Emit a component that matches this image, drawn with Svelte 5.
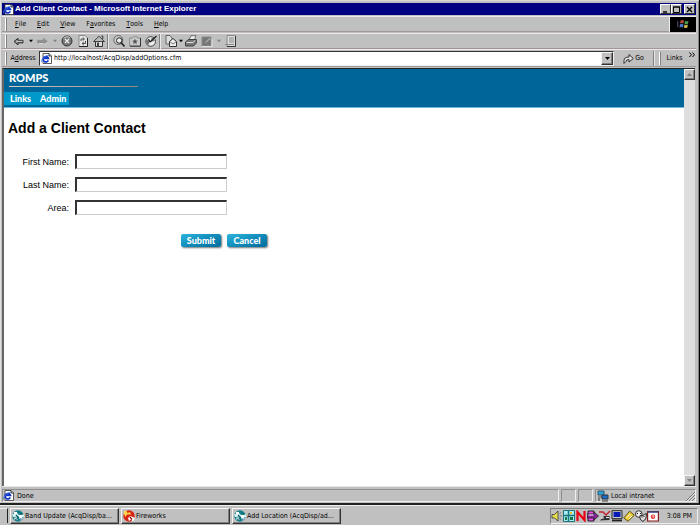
<script>
  const menus = ['File', 'Edit', 'View', 'Favorites', 'Tools', 'Help'];
  const fields = [
    { id: 'first', label: 'First Name:' },
    { id: 'last', label: 'Last Name:' },
    { id: 'area', label: 'Area:' }
  ];
  const tools = [
    'back', 'drop', 'forward', 'fade', 'stop', 'refresh', 'home', 'sep',
    'search', 'favorites', 'history', 'sep',
    'mail', 'tight', 'print', 'edit', 'fade', 'discuss'
  ];
  const tasks = [
    { icon: 'acq', label: 'Band Update (AcqDisp/ba...' },
    { icon: 'fireworks', label: 'Fireworks' },
    { icon: 'acq', label: 'Add Location (AcqDisp/ad...' }
  ];
  const tray = ['speaker', 'grid', 'norton', 'box', 'pen', 'monitor', 'tag', 'mask', 'calendar'];
  let address = $state('http://localhost/AcqDisp/addOptions.cfm');
</script>

{#snippet page()}
  <svg class="i11" viewBox="0 0 11 11" aria-hidden="true">
    <path d="M2 .5h6l2.500 2.500v7.500H2z" fill="#fff" stroke="#333" stroke-width=".8" />
    <path d="M8 .5V3h2.500" fill="#ccc" stroke="#111" stroke-width=".8" />
    <path d="M7.300 7.400A2.700 2.700 0 1 1 7.400 5.300H2.500" fill="none" stroke="#1034c8" stroke-width="1.700" />
    <path d="M.5 9.200C-.6 7 5 1.500 8 2.500" fill="none" stroke="#3d7be8" stroke-width=".8" />
  </svg>
{/snippet}

{#snippet tool(name)}
  <svg class="i12" viewBox="0 0 12 12" aria-hidden="true">
    {#if name === 'back'}
      <path d="M1 6.500 5 3.300v2h5v2.600H5v2z" fill="#888" stroke="#222" stroke-width=".9" />
      <path d="M3 6.300h6.500" stroke="#ddd" stroke-width=".8" />
    {:else if name === 'forward'}
      <path d="M10.500 6.500 6.500 3.300v2h-6v2.600h6v2z" fill="#909090" stroke="#888" stroke-width=".6" />
      <path d="M2 8.600h5l-.1 1.500 3.500-3" fill="none" stroke="#eee" stroke-width=".6" />
    {:else if name === 'stop'}
      <circle cx="6" cy="6" r="5" fill="#777" stroke="#333" />
      <path d="M2.500 3.500A4.300 4.300 0 0 1 9 3" fill="none" stroke="#ddd" />
      <path d="m4 4 4 4m0-4L4 8" stroke="#eee" stroke-width="1.300" />
    {:else if name === 'refresh'}
      <path d="M2 .5h6l2.500 2.500v8.500H2z" fill="#e4e4e4" stroke="#777" stroke-width=".8" />
      <path d="M10.500 3v8.500H2" fill="none" stroke="#222" />
      <path d="M4 6V4h3M5.800 2.500 7.500 4 5.800 5.500M8.500 6v2.500h-3M6.800 7 5 8.500 6.800 10" fill="none" stroke="#444" stroke-width=".9" />
    {:else if name === 'home'}
      <path d="M2.500 6v5.500h7V6" fill="#ddd" stroke="#333" />
      <path d="M.5 6.500 6 1.200l5.500 5.300z" fill="#bbb" stroke="#333" stroke-width=".9" />
      <path d="M8.300 1h1.500v3" fill="none" stroke="#333" /><path d="M4 7.500h2v4H4z" fill="#444" />
    {:else if name === 'search'}
      <circle cx="5.300" cy="5" r="4.500" fill="#ccc" stroke="#666" />
      <circle cx="6.200" cy="5.500" r="2.700" fill="#eee" stroke="#222" />
      <path d="m8 7.500 3.500 4" stroke="#222" stroke-width="1.600" />
    {:else if name === 'favorites'}
      <path d="M.7 3h3l1-1.300h3L8.500 3h3v8H.7z" fill="#ccc" stroke="#888" />
      <path d="M11.500 3v8.200H1" fill="none" stroke="#333" />
      <path d="m6 3.500.8 2 2.200.2-1.700 1.400.5 2.200L6 8.100 4.200 9.300l.5-2.200L3 5.700l2.200-.2z" fill="#555" />
    {:else if name === 'history'}
      <circle cx="5.700" cy="6.500" r="4.800" fill="#eee" stroke="#444" />
      <path d="M1.500 4 5 6.500 3 10.500A5 5 0 0 1 1.500 4M7 2l3 4-4.500.8z" fill="#777" />
      <path d="m5 7 6.500-6M5 7 3.500 4" stroke="#222" stroke-width="1.300" />
    {:else if name === 'mail'}
      <path d="M1 .5h4L7 3v6H1z" fill="#ddd" stroke="#666" />
      <path d="M4.500 6.500 8 3.500l3.500 3v5h-7z" fill="#eee" stroke="#333" />
      <path d="m4.500 6.500 3.500 2.500 3.500-2.500" fill="none" stroke="#555" stroke-width=".8" />
    {:else if name === 'print'}
      <path d="M4 5 6 .7h5L9 5.500z" fill="#eee" stroke="#555" stroke-width=".8" />
      <path d="m.5 7 3-2.500h7.800V8L8.500 11H.5z" fill="#777" stroke="#333" stroke-width=".9" />
      <path d="M1.500 7.500h6.300l2.500-2" fill="none" stroke="#ddd" />
    {:else if name === 'edit'}
      <path d="M1 2h9v9H1z" fill="#777" stroke="#888" />
      <path d="M1 11.500h10V4" fill="none" stroke="#eee" stroke-width=".8" />
      <path d="m4.500 7.500 5-4.500" stroke="#aaa" stroke-width="1.200" />
    {:else}
      <path d="M2 .5h8.500v11H2z" fill="#ddd" stroke="#888" />
      <path d="M10.500 1v10.500H2" fill="none" stroke="#333" />
      <path d="M4 3h5M4 5h5M4 7h5M0 9.500h9" stroke="#888" />
    {/if}
  </svg>
{/snippet}

{#snippet taskIcon(name)}
  <svg class="i12" viewBox="0 0 12 12" aria-hidden="true">
    {#if name === 'acq'}
      <circle cx="6" cy="6" r="5.700" fill="#15808a" />
      <path d="M0 4.500 5 3l2 2 5-.5V7L8 8l-2-1.500L1 7z" fill="#d9f2f2" />
      <path d="M2 2h3v2H2zM7 5.500h3v3H7zM2.500 7.500h3v2.500h-3z" fill="#fff" />
      <path d="m4 5 3 3M8 3l2 1.500M3 9.500l3-1" stroke="#0b636d" stroke-width="1.200" />
      <path d="M8 10.500 11 8" stroke="#bbe" />
    {:else}
      <circle cx="6" cy="6" r="5.700" fill="#d82414" />
      <path d="M1 1h2.500l1 2L7 2l1 2.500H4L2.500 7 1 4z" fill="#ffd34a" />
      <path d="m5 8 2.500-2 4.500 2-2 3.500L8 9.500 6 11z" fill="#fff" />
      <path d="m7 7 2 2.500" stroke="#8d120c" stroke-width="1.300" />
    {/if}
  </svg>
{/snippet}

{#snippet trayIcon(name)}
  <svg class="i12" viewBox="0 0 12 12" aria-hidden="true">
    {#if name === 'speaker'}
      <path d="M1 4.500h2.500L7 1v10L3.500 8H1z" fill="#e7dd4b" stroke="#333" stroke-width=".8" />
      <path d="M8.500 3.500 10 2.500M8.500 6H11M8.500 8.500l1.500 1" stroke="#666" stroke-width=".8" />
    {:else if name === 'grid'}
      <path d="M.5.5h11v11H.5z" fill="#a7ecf2" stroke="#22727a" />
      <path d="M5.500 1v10M1 5.500h10" stroke="#16757b" stroke-width="1.500" />
      <path d="M7 2h2v2H7z" fill="#e8c321" /><path d="M2 7h2v3H2zM7 7h3v3H7z" fill="#147744" />
    {:else if name === 'norton'}
      <path d="M2.500 11V2L9.500 10V1" fill="none" stroke="#e60012" stroke-width="2.200" />
    {:else if name === 'box'}
      <path d="M1 1h6v10H1z" fill="#e44be0" stroke="#222" />
      <path d="M0 4h7V2l4.500 4L7 10V8H0z" fill="#832395" stroke="#222" stroke-width=".8" />
      <path d="M1.500 5h5" stroke="#fff" />
    {:else if name === 'pen'}
      <path d="M0 2h4l3 3 4-4" fill="none" stroke="#c32432" stroke-width="1.500" />
      <path d="M1 10.500 5 6h5.500v4z" fill="#333" /><path d="M2 8h3M7 7.500h3" stroke="#eee" />
    {:else if name === 'monitor'}
      <path d="M1 .7h10v8H1z" fill="#ccc" stroke="#222" />
      <path d="M2.500 2h7v5h-7z" fill="#0719b6" /><path d="M1 10.500h10" stroke="#222" stroke-width="1.800" />
    {:else if name === 'tag'}
      <path d="m.7 8 6-6.800 4.600 4-6.300 6z" fill="#edca34" stroke="#5d5215" />
      <path d="m4 7.500 3-3.300M6 9l3-3" stroke="#fff" />
    {:else if name === 'mask'}
      <circle cx="3.800" cy="4" r="3.300" fill="#eee" stroke="#333" />
      <path d="M5 5.500c2 1 4-1 6.300-2 .5 4-1 7-3.500 7.800C5.500 10.500 4.500 8 5 5.500z" fill="#ddd" stroke="#222" />
      <path d="M2 3.500h1M5 3.500h1M7 6.500v1M9 6v1" stroke="#111" />
    {:else}
      <path d="M.6 1.500h10.800v9.500H.6z" fill="#fff" stroke="#8b1a1a" stroke-width="1.200" />
      <path d="M.5 2h11" stroke="#394a86" stroke-width="1.600" />
      <circle cx="6" cy="6.800" r="2.300" fill="#e5403b" /><path d="M6 5v2h1.500" fill="none" stroke="#fff" stroke-width=".7" />
    {/if}
  </svg>
{/snippet}

{#snippet arrow(up)}
  <svg class="i5" viewBox="0 0 5 5" aria-hidden="true">
    <path d={up ? 'M0 4h5L2.500 1z' : 'M0 1h5L2.500 4z'} fill="currentColor" />
  </svg>
{/snippet}

<div class="screen">
  <div class="window">
    <header class="titlebar">
      {@render page()}
      <span class="title">Add Client Contact - Microsoft Internet Explorer</span>
      <button class="cap" aria-label="Minimize"><svg class="i7" viewBox="0 0 7 7"><path d="M1 6h4" stroke="#000" stroke-width="1.500" /></svg></button>
      <button class="cap" aria-label="Maximize"><svg class="i7" viewBox="0 0 7 7"><path d="M.5 1h6v5.500h-6zM0 1h7" fill="none" stroke="#000" /></svg></button>
      <button class="cap close" aria-label="Close"><svg class="i7" viewBox="0 0 7 7"><path d="m1 1 5 5m0-5L1 6" stroke="#000" stroke-width="1.400" /></svg></button>
    </header>

    <div class="bar menubar">
      <i class="grip"></i>
      <nav class="menus">
        {#each menus as m}
          <button class="menu">{#if m === 'Favorites'}F<u>a</u>vorites{:else}<u>{m[0]}</u>{m.slice(1)}{/if}</button>
        {/each}
      </nav>
      <div class="throbber">
        <svg class="flag" viewBox="0 0 12 10" aria-hidden="true">
          <path d="M3.500 1.500Q5.500.5 7 1.500L6.500 4.500Q5 3.500 3 4.500z" fill="#b04b35" />
          <path d="M8 1.700q2 1 3.500 0L11 4.700q-1.800 1-3.500 0z" fill="#4d9a50" />
          <path d="M3 5.300q2-1 3.400 0L6 8.500q-1.700-1-3.500 0z" fill="#4778c8" />
          <path d="M7.400 5.600q2 1 3.500 0l-.5 3q-1.800 1-3.500 0z" fill="#c9b14c" />
          <path d="M0 3h2M0 5h2M0 7h2" stroke="#7b6d9a" stroke-dasharray="1 .5" />
        </svg>
      </div>
    </div>

    <div class="bar tools">
      <i class="grip"></i>
      {#each tools as t}
        {#if t === 'sep'}
          <i class="sep"></i>
        {:else if t === 'drop' || t === 'fade' || t === 'tight'}
          <button class="drop {t}" aria-label="More">{@render arrow(false)}</button>
        {:else}
          <button class="tool" aria-label={t}>{@render tool(t)}</button>
        {/if}
      {/each}
    </div>

    <div class="bar addressbar">
      <i class="grip"></i>
      <label for="address">A<u>d</u>dress</label>
      <div class="combo">
        {@render page()}
        <input id="address" type="text" bind:value={address} />
        <button class="raised combodrop" aria-label="Show addresses">{@render arrow(false)}</button>
      </div>
      <button class="go">
        <svg class="i11" viewBox="0 0 11 11" aria-hidden="true">
          <path d="M1 10.500V7.500Q1 4 6 4V1.500L10.300 5.500 6 9V6.500Q3 6.500 3 8.500z" fill="#ddd" stroke="#222" stroke-width=".9" />
        </svg>
        Go
      </button>
      <i class="sep"></i>
      <i class="grip"></i>
      <button class="links">Links</button>
      <button class="chevron" aria-label="More links">
        <svg class="i6" viewBox="0 0 6 6"><path d="m.5.5 2 2.300-2 2.200m3-4.500 2 2.300-2 2.200" fill="none" stroke="#000" /></svg>
      </button>
    </div>

    <div class="viewport">
      <main>
        <div class="banner">
          <div class="brand">ROMPS</div>
          <div class="rule"></div>
          <nav class="tabs"><a href="#links">Links</a><a href="#admin">Admin</a></nav>
        </div>
        <h1>Add a Client Contact</h1>
        <form onsubmit={(e) => e.preventDefault()}>
          {#each fields as f}
            <div class="row">
              <label for={f.id}>{f.label}</label>
              <input id={f.id} type="text" />
            </div>
          {/each}
          <div class="actions">
            <button class="pill" type="submit">Submit</button>
            <button class="pill" type="reset">Cancel</button>
          </div>
        </form>
      </main>
      <div class="scroll">
        <button class="raised" aria-label="Scroll up">{@render arrow(true)}</button>
        <button class="raised" aria-label="Scroll down">{@render arrow(false)}</button>
      </div>
    </div>

    <footer class="status">
      <div class="pane wide">{@render page()}<span>Done</span></div>
      <div class="pane slot"></div>
      <div class="pane slot"></div>
      <div class="pane zone">
        <svg class="i12" viewBox="0 0 12 12" aria-hidden="true">
          <path d="M1 1h6v4H1z" fill="#2ba4da" stroke="#34566b" /><path d="M1 7h5" stroke="#555" />
          <path d="M5 5h6v4H5z" fill="#1a6ed0" stroke="#333" /><path d="M2 8v3M5 11h6" stroke="#333" />
        </svg>
        <span>Local intranet</span>
        <svg class="size" viewBox="0 0 10 10" aria-hidden="true">
          <path d="m1 10 9-9M4 10l6-6M7 10l3-3" stroke="#777" /><path d="m2.200 10 8-8m-5 8 5-5m-2 5 2-2" stroke="#fff" stroke-width=".6" />
        </svg>
      </div>
    </footer>
  </div>

  <div class="taskbar">
    <i class="start"></i>
    {#each tasks as t}
      <button class="task raised">{@render taskIcon(t.icon)}<span>{t.label}</span></button>
    {/each}
    <div class="tray">
      {#each tray as t}{@render trayIcon(t)}{/each}
      <time>3:08 PM</time>
    </div>
  </div>
</div>

<style>
  :global(body) { margin: 0; }
  * { box-sizing: border-box; }
  .screen {
    display: flex; flex-direction: column; height: 100vh;
    background: #c0c0c0; color: #000;
    font: 7px/10px "DejaVu Sans Condensed", "DejaVu Sans", sans-serif;
  }
  button, input { font: inherit; color: inherit; margin: 0; padding: 0; border: 0; background: none; border-radius: 0; }
  button { display: flex; align-items: center; justify-content: center; flex: none; white-space: nowrap; }
  svg { display: block; flex: none; }
  .i5 { width: 5px; height: 5px; }
  .i6 { width: 6px; height: 6px; }
  .i7 { width: 7px; height: 7px; }
  .i11 { width: 11px; height: 11px; }
  .i12 { width: 12px; height: 12px; }

  .window {
    flex: 1; min-height: 0; display: flex; flex-direction: column;
    padding: 3px 3px 0 2px; border-right: 1px solid #000; border-bottom: 2px solid #222;
    box-shadow: inset 0 1px #d8d8d8, inset 1px 0 #e0e0e0, inset -1px 0 #808080;
  }
  .raised { background: #c0c0c0; border: 1px solid; border-color: #f4f4f4 #333 #333 #f4f4f4; box-shadow: inset -1px -1px #808080; }

  .titlebar { display: flex; align-items: center; flex: none; height: 12px; padding: 0 1px; background: #000080; color: #fff; font-family: "Liberation Sans", Arial, sans-serif; font-weight: bold; }
  .title { flex: 1; margin-left: 1px; font-size: 8px; white-space: nowrap; }
  .cap { width: 11px; height: 10px; background: #c0c0c0; border: 1px solid; border-color: #fff #333 #333 #fff; }
  .close { margin-left: 2px; }

  .bar { display: flex; align-items: center; flex: none; height: 16px; padding-left: 3px; border-top: 1px solid #f0e8e8; border-bottom: 1px solid #a09898; }
  .grip { flex: none; width: 2px; height: 13px; border-left: 1px solid #fff; border-right: 1px solid #808080; }
  .sep { flex: none; width: 4px; height: 15px; border-left: 1px solid #808080; box-shadow: inset 1px 0 #e8e8e8; }
  .menubar { margin-top: 1px; }
  .menus { display: flex; flex: 1; gap: 11px; margin-left: 8px; }
  .throbber { display: flex; align-items: center; justify-content: center; width: 27px; height: 15px; background: #000; border-left: 1px solid #eee; }
  .flag { width: 12px; height: 10px; }
  .tools { margin-top: 1px; }
  .tools .grip { margin-right: 4px; }
  .tool { width: 16px; height: 14px; }
  .drop { width: 8px; height: 14px; }
  .drop .i5 { width: 4px; height: 4px; }
  .tight { width: 4px; }
  .fade { color: #808080; }

  .addressbar { height: 18px; padding: 0 1px 0 3px; gap: 2px; }
  .addressbar label { width: 28px; text-align: center; white-space: nowrap; }
  .combo { display: flex; align-items: center; flex: 1; height: 15px; padding-left: 1px; background: #fff; border: 1px solid; border-color: #333 #eee #eee #333; }
  .combo input { flex: 1; min-width: 0; height: 12px; margin-left: 2px; outline: 0; }
  .combodrop { width: 12px; height: 13px; }
  .go { width: 35px; gap: 1px; }
  .links { width: 23px; }
  .chevron { width: 7px; height: 12px; align-items: flex-start; }

  .viewport { display: flex; flex: 1; min-height: 0; margin: 1px 1px 0 0; border: solid #222; border-width: 1px 0 0 2px; border-left-color: #666; }
  main { flex: 1; min-width: 0; background: #fff; }
  .banner { height: 39px; background: #006699; border-bottom: 1px solid #6fb6dc; color: #fff; font-family: Lato, sans-serif; font-weight: 900; }
  .brand { padding: 3px 0 2px 5px; font-size: 11px; line-height: 12px; }
  .rule { width: 129px; height: 1px; margin-left: 5px; background: linear-gradient(90deg, #d6ccc4, #94847c); }
  .tabs { display: flex; width: fit-content; gap: 9px; height: 13px; margin-top: 5px; padding: 0 3px 0 6px; background: #0099cc; font-size: 9px; line-height: 13px; }
  .tabs a { color: #fff; text-decoration: none; }
  h1 { margin: 11px 0 0 4px; font-family: "Liberation Sans", Arial, sans-serif; font-size: 14px; line-height: 18px; }
  form { margin-top: 17px; width: 263px; font-family: "Liberation Sans", Arial, sans-serif; font-size: 9px; }
  .row { display: flex; align-items: center; height: 15px; margin-bottom: 8px; }
  .row label { width: 65px; margin-right: 6px; text-align: right; }
  .row input { width: 152px; height: 15px; padding: 0 3px; background: #fff; border: 1px solid; border-color: #333 #ccc #ccc #333; border-top-width: 2px; border-left-width: 2px; }
  .actions { display: flex; justify-content: flex-end; gap: 6px; margin-top: 19px; }
  .pill {
    width: 40px; height: 13px; border-radius: 2px; color: #fff;
    font: 900 9px/12px Lato, sans-serif;
    background: linear-gradient(160deg, #2cb4dc, #1089b8 55%, #006c9c);
    box-shadow: 1px 1px 2px #777;
  }
  .scroll { display: flex; flex-direction: column; justify-content: space-between; width: 11px; background: #dedede; color: #808080; }
  .scroll button { width: 11px; height: 11px; }

  .status { display: flex; flex: none; gap: 2px; height: 17px; padding: 2px 0 1px; border-top: 1px solid #e8e8e8; }
  .pane { display: flex; align-items: center; border: 1px solid; border-color: #909090 #eee #eee #909090; }
  .wide { flex: 1; gap: 3px; }
  .slot { width: 15px; }
  .zone { width: 101px; gap: 2px; padding-left: 1px; }
  .zone span { flex: 1; white-space: nowrap; }
  .size { width: 10px; height: 10px; align-self: flex-end; }

  .taskbar { display: flex; align-items: center; flex: none; gap: 2px; height: 20px; padding-right: 2px; border-top: 1px solid #eee; }
  .start { width: 8px; height: 15px; border-top: 1px solid #eee; border-right: 1px solid #222; }
  .task { justify-content: flex-start; width: 109px; height: 16px; gap: 1px; padding-left: 1px; }
  .tray { display: flex; align-items: center; height: 16px; margin-left: auto; padding: 0 5px 0 0; border: 1px solid; border-color: #808080 #eee #eee #808080; }
  time { margin-left: 8px; white-space: nowrap; }
</style>
